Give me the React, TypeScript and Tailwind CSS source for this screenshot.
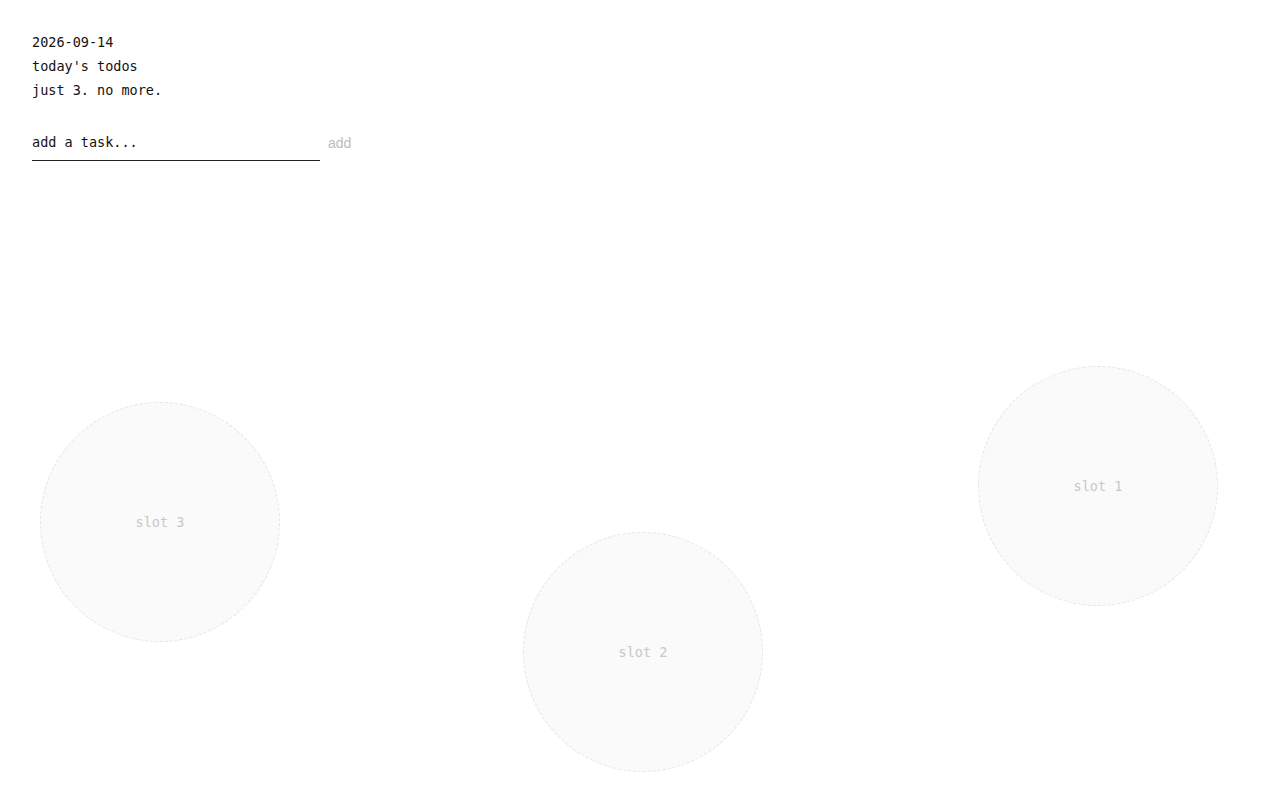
import React, { useState } from 'react';

const slots = [
  { id: 1, left: 'left-[978px]', top: 'top-[366px]' },
  { id: 2, left: 'left-[523px]', top: 'top-[532px]' },
  { id: 3, left: 'left-[40px]', top: 'top-[402px]' },
];

export default function App() {
  const [task, setTask] = useState('');

  return (
    <div className="relative w-[1280px] h-[800px] overflow-hidden bg-white text-[#111] font-['DejaVu_Sans_Mono',monospace]">
      <div className="px-8 pt-[30px]">
        <div className="text-[13.5px] leading-6">2026-09-14</div>
        <div className="text-[13.5px] leading-6">today's todos</div>
        <div className="text-[13.5px] leading-6">just 3. no more.</div>
        <form
          className="mt-[24px] flex items-start gap-2"
          onSubmit={(e) => {
            e.preventDefault();
            setTask('');
          }}
        >
          <input
            value={task}
            onChange={(e) => setTask(e.target.value)}
            placeholder="add a task..."
            className="w-[288px] h-[35px] pb-[2px] border-b border-[#222] bg-transparent text-[13.5px] outline-none placeholder:text-[#111] font-['DejaVu_Sans_Mono',monospace]"
          />
          <button type="submit" className="h-[35px] text-[14px] text-[#bbb] font-['Liberation_Sans',Arial,sans-serif]">
            add
          </button>
        </form>
      </div>

      {slots.map((s) => (
        <div
          key={s.id}
          className={`absolute ${s.left} ${s.top} w-[240px] h-[240px] rounded-full border border-dashed border-[#e4e4e4] bg-[#fafafa] flex items-center justify-center text-[13.5px] text-[#c8c8c8]`}
        >
          slot {s.id}
        </div>
      ))}
    </div>
  );
}
